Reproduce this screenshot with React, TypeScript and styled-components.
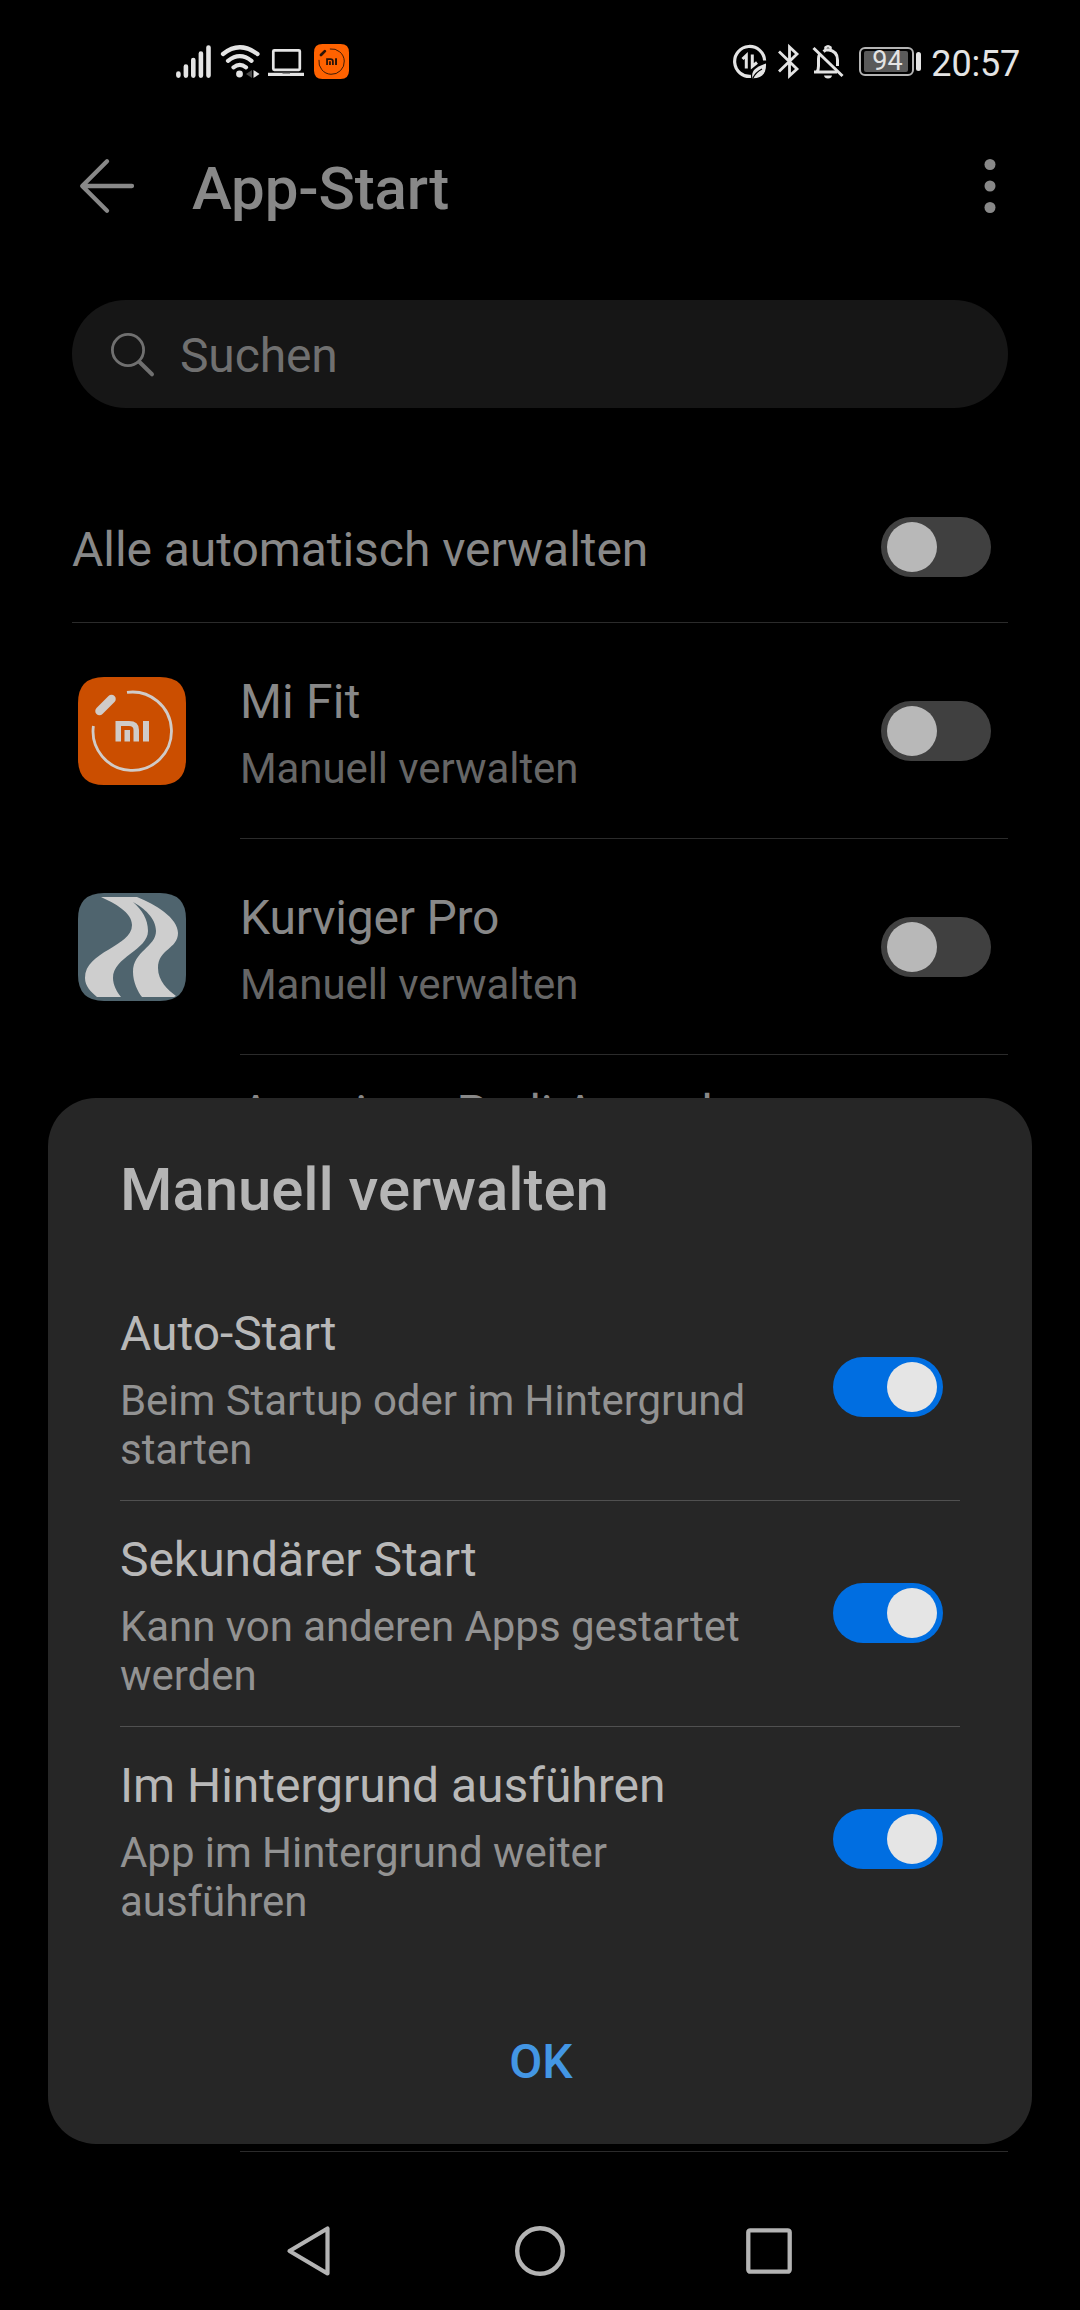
import React from "react";
import styled, { createGlobalStyle } from "styled-components";

const GlobalStyle = createGlobalStyle`
  html, body { margin: 0; padding: 0; background: #000; }
  * { box-sizing: border-box; }
`;

const Screen = styled.div`
  position: relative;
  width: 1080px;
  height: 2310px;
  overflow: hidden;
  background: #000;
  font-family: Roboto, "Noto Sans", sans-serif;
  display: flex;
  flex-direction: column;
`;

const StatusBar = styled.div`
  height: 100px;
  flex: none;
  display: flex;
  justify-content: space-between;
  padding: 0 60px 0 176px;
`;

const StatusGroup = styled.div`
  display: flex;
  align-items: flex-start;
  padding-top: 44px;
`;

const Glyph = styled.svg<{ $gap?: number }>`
  display: block;
  flex: none;
  overflow: visible;
  margin-right: ${(p) => p.$gap ?? 0}px;
`;

const Battery = styled.div`
  display: flex;
  align-items: center;
  margin: 3px 10px 0 0;
`;

const BatteryCase = styled.div`
  width: 55px;
  height: 29px;
  border: 2px solid #b4b4b4;
  border-radius: 6px;
  padding: 2px;
`;

const BatteryFill = styled.div`
  width: 44px;
  height: 21px;
  background: #5a5a5a;
  border-radius: 2px;
  margin-left: 1px;
  padding-left: 8px;
  display: flex;
  font-size: 27px;
  line-height: 21px;
  color: #e4e4e4;
`;

const BatteryTip = styled.div`
  width: 5px;
  height: 19px;
  margin-left: 2px;
  border-radius: 3px;
  background: #e4e4e4;
`;

const Clock = styled.div`
  font-size: 36px;
  line-height: 40px;
  letter-spacing: -0.2px;
  color: #e4e4e4;
`;

const Header = styled.header`
  height: 172px;
  flex: none;
  display: flex;
  align-items: center;
  padding: 0 84px 0 80px;
`;

const PageTitle = styled.h1`
  flex: 1;
  margin: 0;
  padding: 5px 0 0 58px;
  font-size: 60px;
  line-height: 70px;
  font-weight: 500;
  letter-spacing: -0.15px;
  color: #888;
`;

const SearchField = styled.div`
  flex: none;
  height: 108px;
  margin: 28px 72px 64px;
  padding: 0 39px;
  border-radius: 54px;
  background: #161616;
  display: flex;
  align-items: center;
`;

const SearchHint = styled.span`
  padding: 3px 0 0 26px;
  font-size: 48px;
  line-height: 56px;
  letter-spacing: -0.15px;
  color: #707070;
`;

const AllRow = styled.div`
  flex: none;
  height: 151px;
  margin: 0 72px;
  padding-right: 17px;
  border-bottom: 1px solid #2b2b2b;
  display: flex;
  align-items: center;
  justify-content: space-between;
`;

const AllLabel = styled.span`
  padding-top: 6px;
  font-size: 48px;
  line-height: 56px;
  letter-spacing: -0.05px;
  color: #888;
`;

const AppRow = styled.div<{ $height: number }>`
  flex: none;
  height: ${(p) => p.$height}px;
  padding: 0 72px 0 78px;
  display: flex;
  align-items: center;
`;

const AppBody = styled.div<{ $top: number }>`
  flex: 1;
  height: 100%;
  margin-left: 54px;
  padding: ${(p) => p.$top}px 17px 0 0;
  border-bottom: 1px solid #2b2b2b;
  display: flex;
  justify-content: space-between;
`;

const AppTexts = styled.div`
  display: flex;
  flex-direction: column;
  gap: 14px;
  max-width: 560px;
`;

const AppName = styled.div<{ $tracking?: number }>`
  font-size: 48px;
  line-height: 56px;
  letter-spacing: ${(p) => p.$tracking ?? 0}px;
  color: #888;
`;

const AppState = styled.div`
  font-size: 42px;
  line-height: 49px;
  letter-spacing: -0.08px;
  color: #666;
`;

const ToggleSlot = styled.div`
  margin-top: 27px;
`;

const Track = styled.div<{ $on: boolean }>`
  flex: none;
  width: 110px;
  height: 60px;
  padding: 5px 6px;
  border-radius: 30px;
  background: ${(p) => (p.$on ? "#006ee1" : "#404040")};
  display: flex;
  justify-content: ${(p) => (p.$on ? "flex-end" : "flex-start")};
`;

const Knob = styled.div<{ $on: boolean }>`
  width: 50px;
  height: 50px;
  border-radius: 50%;
  background: ${(p) => (p.$on ? "#e5e5e5" : "#b8b8b8")};
`;

const Dialog = styled.section`
  position: absolute;
  left: 48px;
  top: 1098px;
  width: 984px;
  height: 1046px;
  border-radius: 48px;
  background: #262626;
  padding: 57px 72px 0;
  display: flex;
  flex-direction: column;
`;

const DialogTitle = styled.h2`
  margin: 0 0 50px;
  font-size: 60px;
  line-height: 70px;
  font-weight: 500;
  letter-spacing: -0.08px;
  color: #b5b5b5;
`;

const OptionRow = styled.div<{ $last?: boolean }>`
  height: 226px;
  padding-right: 17px;
  border-bottom: 1px solid ${(p) => (p.$last ? "transparent" : "#505050")};
  display: flex;
  align-items: flex-start;
  justify-content: space-between;
`;

const OptionTexts = styled.div`
  display: flex;
  flex-direction: column;
  gap: 14px;
  width: 640px;
  padding-top: 31px;
`;

const OptionSwitch = styled.div`
  padding-top: 82px;
`;

const OptionName = styled.div`
  font-size: 48px;
  line-height: 56px;
  letter-spacing: -0.04px;
  color: #b8b8b8;
`;

const OptionInfo = styled.div`
  font-size: 42px;
  line-height: 49px;
  letter-spacing: -0.05px;
  color: #929292;
`;

const OkButton = styled.button`
  align-self: center;
  margin: 81px 0 0 2px;
  padding: 0;
  border: 0;
  background: none;
  font: 500 48px/56px Roboto, sans-serif;
  color: #4396e4;
`;

const NavBar = styled.nav`
  position: absolute;
  left: 0;
  right: 0;
  bottom: 0;
  height: 118px;
  padding-left: 287px;
  display: flex;
  align-items: center;
`;

function Toggle({ on = false }: { on?: boolean }) {
  return (
    <Track $on={on} role="switch" aria-checked={on}>
      <Knob $on={on} />
    </Track>
  );
}

function MiFitIcon({ size, bg, fg, gap }: { size: number; bg: string; fg: string; gap?: number }) {
  return (
    <Glyph width={size} height={size} viewBox="0 0 108 108" $gap={gap}>
      <path d="M26 0H82Q108 0 108 26V82Q108 108 82 108H26Q0 108 0 82V26Q0 0 26 0Z" fill={bg} />
      <path d="M49 15.400A39.200 39.200 0 1 1 15.400 49" fill="none" stroke={fg} strokeWidth="2.800" />
      <path d="M21.500 34L33.500 22" stroke={fg} strokeWidth="8.500" strokeLinecap="round" />
      <path d="M37.500 64.500V44H51Q61 44 61 53V64.500H55.500V53Q55.500 49 51 49H43V64.500ZM46.500 53H52V64.500H46.500ZM65 44H71V64.500H65Z" fill={fg} />
    </Glyph>
  );
}

function KurvigerIcon() {
  return (
    <Glyph width="108" height="108" viewBox="0 0 108 108">
      <path d="M26 0H82Q108 0 108 26V82Q108 108 82 108H26Q0 108 0 82V26Q0 0 26 0Z" fill="#4f646e" />
      <path d="M23 4H59C77 11 100 25 100 40C100 56 80 56 80 75C80 88 90 97 98 103L96 104H64C60 99 55 89 55 79C55 58 78 54 78 38C78 25 66 15 55 9C64 17 70 26 70 38C70 57 35 64 35 85C35 92 39 99 43 104H19C13 99 7 93 7 85C7 58 54 54 54 32C54 19 36 10 23 4Z" fill="#cecece" />
    </Glyph>
  );
}

const apps = [
  { name: "Mi Fit", tracking: 0.2, icon: <MiFitIcon size={108} bg="#cb4e00" fg="#d0cbc8" /> },
  { name: "Kurviger Pro", tracking: -0.2, icon: <KurvigerIcon /> },
];

const options = [
  { name: "Auto-Start", info: "Beim Startup oder im Hintergrund starten" },
  { name: "Sekundärer Start", info: "Kann von anderen Apps gestartet werden" },
  { name: "Im Hintergrund ausführen", info: "App im Hintergrund weiter ausführen" },
];

const light = "#e4e4e4";

function StatusIcons() {
  return (
    <StatusBar>
      <StatusGroup>
        <Glyph width="35" height="35" viewBox="0 0 35 35" $gap={9} stroke={light} strokeWidth="4.600" strokeLinecap="round">
          <path d="M2.400 31.600V29.500M9.900 31.600V22.500M17.300 31.600V16M24.900 31.600V9.500M32.500 31.600V3.500" />
        </Glyph>
        <Glyph width="40" height="35" viewBox="0 0 40 35" $gap={8} fill="none" stroke={light} strokeWidth="4.200" strokeLinecap="round">
          <path d="M3 10Q19.500-3.500 37.500 10M8 16.800Q19.800 7.500 31.500 16.800M13.500 23.300Q19.800 18.500 26 23.300" />
          <circle cx="19.500" cy="30" r="3.400" fill={light} stroke="none" />
          <path d="M32 26V34L26 30Z" fill="#4a4a4a" stroke="none" />
          <path d="M33.500 26V34L39.500 30Z" fill={light} stroke="none" />
        </Glyph>
        <Glyph width="36" height="35" viewBox="0 0 36 35" $gap={10} fill="none" stroke={light} strokeWidth="2.700">
          <rect x="5.300" y="6.300" width="26.500" height="19.500" rx="1" />
          <path d="M0 30.300H36" strokeWidth="3.200" />
          <path d="M14.500 29.300H22" stroke="#777" strokeWidth="1" />
        </Glyph>
        <MiFitIcon size={35} bg="#ff6200" fg="#2a1408" />
      </StatusGroup>
      <StatusGroup>
        <Glyph width="34" height="35" viewBox="0 0 34 35" $gap={11} fill="none" stroke={light}>
          <path d="M31.600 16.500A15 15 0 1 0 18 32.400" strokeWidth="3.200" />
          <path d="M9.500 15L13.300 11.500V24.500M19.300 10.500V22.300L24 18.500" strokeWidth="3" />
          <path d="M33 19.500C33.500 29 29 34.500 19.500 34.300C17.500 26 24 22.500 33 19.500Z" fill={light} stroke="none" />
          <path d="M20 34Q22.500 28.500 29 25" stroke="#000" strokeWidth="1.300" />
        </Glyph>
        <Glyph width="22" height="35" viewBox="0 0 22 35" $gap={12} fill="none" stroke={light} strokeWidth="2.800" strokeLinejoin="miter">
          <path d="M1 7.500L19 25L11.500 31.800V3L19 10L1 27.500" />
        </Glyph>
        <Glyph width="32" height="35" viewBox="0 0 32 35" $gap={15} fill="none" stroke={light} strokeWidth="3">
          <path d="M2 28H25M5 28Q6.500 25.500 6.500 22V15Q6.500 12 7.500 10.500M11.500 7.500Q13.500 5.800 16 5.800Q25.500 7 25.500 16V22" />
          <path d="M13.500 5.500V3.500Q16 1 18.500 3.500V6" strokeWidth="2.500" />
          <path d="M12 31.500H20Q19.500 34.500 16 34.500T12 31.500Z" fill={light} stroke="none" />
          <path d="M1.500 4L30.500 32" />
        </Glyph>
        <Battery>
          <BatteryCase>
            <BatteryFill>94</BatteryFill>
          </BatteryCase>
          <BatteryTip />
        </Battery>
        <Clock>20:57</Clock>
      </StatusGroup>
    </StatusBar>
  );
}

export default function App() {
  return (
    <Screen>
      <GlobalStyle />
      <StatusIcons />
      <Header>
        <Glyph width="54" height="54" viewBox="0 0 54 54" fill="none" stroke="#888" strokeWidth="4.300" strokeLinecap="round" strokeLinejoin="round">
          <path d="M27 2.200L2.200 27L27 51.800M3 27H52" />
        </Glyph>
        <PageTitle>App-Start</PageTitle>
        <Glyph width="12" height="54" viewBox="0 0 12 54" fill="#888">
          <circle cx="6" cy="5.500" r="5.500" />
          <circle cx="6" cy="27" r="5.500" />
          <circle cx="6" cy="48.500" r="5.500" />
        </Glyph>
      </Header>
      <SearchField>
        <Glyph width="43" height="43" viewBox="0 0 43 43" fill="none" stroke="#707070" strokeLinecap="round">
          <circle cx="17" cy="17" r="15.600" strokeWidth="2.800" />
          <path d="M28.500 29L41 41.300" strokeWidth="4" />
        </Glyph>
        <SearchHint>Suchen</SearchHint>
      </SearchField>
      <AllRow>
        <AllLabel>Alle automatisch verwalten</AllLabel>
        <Toggle />
      </AllRow>
      {apps.map((app) => (
        <AppRow key={app.name} $height={216}>
          {app.icon}
          <AppBody $top={51}>
            <AppTexts>
              <AppName $tracking={app.tracking}>{app.name}</AppName>
              <AppState>Manuell verwalten</AppState>
            </AppTexts>
            <ToggleSlot>
              <Toggle />
            </ToggleSlot>
          </AppBody>
        </AppRow>
      ))}
      <AppRow $height={1097}>
        <Glyph width="108" height="108" />
        <AppBody $top={30}>
          <AppTexts>
            <AppName>American Podi Appeal</AppName>
          </AppTexts>
        </AppBody>
      </AppRow>
      <Dialog>
        <DialogTitle>Manuell verwalten</DialogTitle>
        {options.map((option, i) => (
          <OptionRow key={option.name} $last={i === options.length - 1}>
            <OptionTexts>
              <OptionName>{option.name}</OptionName>
              <OptionInfo>{option.info}</OptionInfo>
            </OptionTexts>
            <OptionSwitch>
              <Toggle on />
            </OptionSwitch>
          </OptionRow>
        ))}
        <OkButton>OK</OkButton>
      </Dialog>
      <NavBar>
        <Glyph width="43" height="50" viewBox="0 0 43 50" $gap={185} fill="none" stroke="#b4b4b4" strokeWidth="4.200" strokeLinejoin="round">
          <path d="M40.500 2.500V47.500L2.500 25Z" />
        </Glyph>
        <Glyph width="50" height="50" viewBox="0 0 50 50" $gap={181} fill="none" stroke="#b4b4b4" strokeWidth="4.400">
          <circle cx="25" cy="25" r="22.800" />
        </Glyph>
        <Glyph width="46" height="46" viewBox="0 0 46 46" fill="none" stroke="#b4b4b4" strokeWidth="4.300">
          <rect x="2.300" y="2.300" width="41.400" height="41.400" rx="2" />
        </Glyph>
      </NavBar>
    </Screen>
  );
}
